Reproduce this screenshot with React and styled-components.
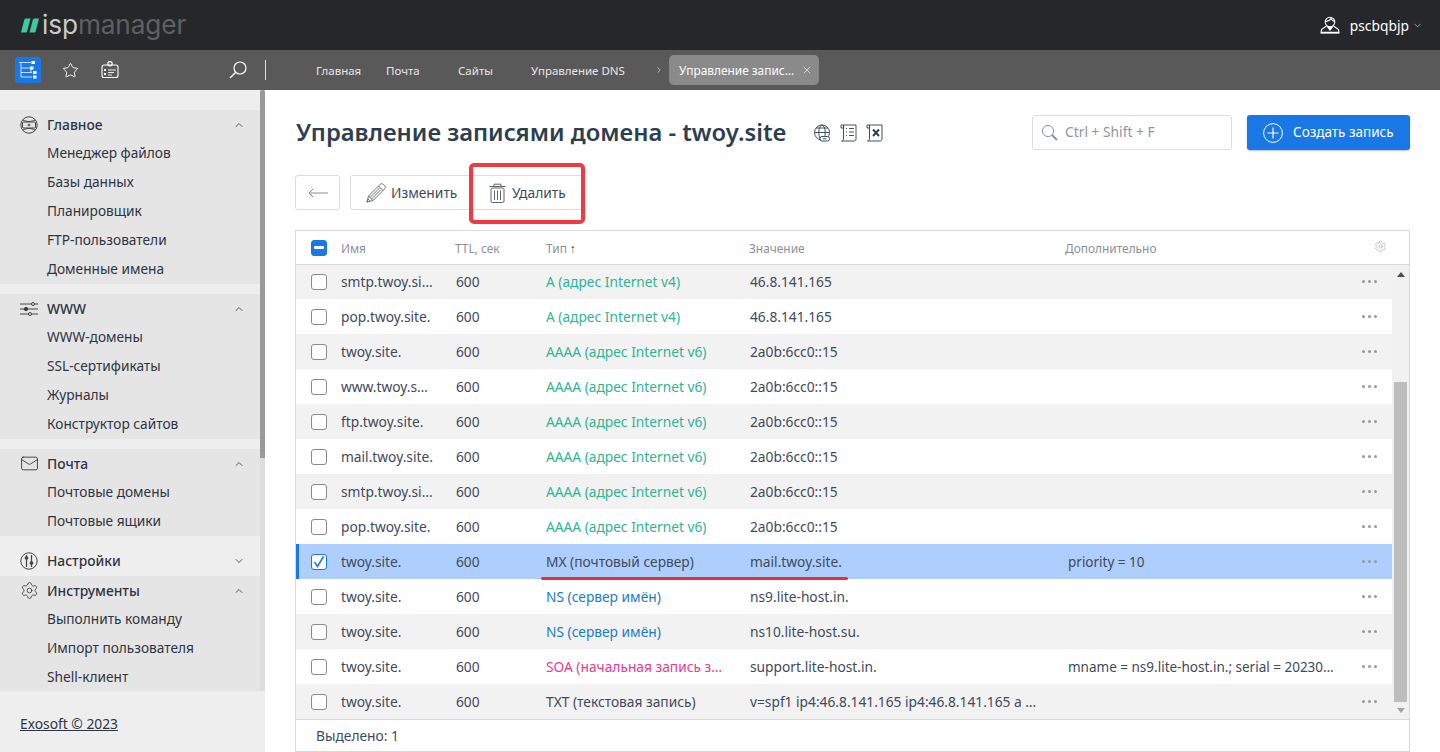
import React from "react";
import styled, { createGlobalStyle } from "styled-components";
import { Star, Settings, Mail, ChevronUp, ChevronDown, ChevronRight, X } from "lucide-react";

const Global = createGlobalStyle`
  html, body { margin: 0; padding: 0; height: 100%; overflow: hidden; background: #fff; }
  body { font-family: "Noto Sans", "Liberation Sans", sans-serif; font-size: 13.8px; color: #3f4a5a; }
  * { box-sizing: border-box; }
`;

const Page = styled.div`display:flex;flex-direction:column;width:1440px;height:752px;position:relative;overflow:hidden;`;
const TopBar = styled.header`height:50px;background:#26272b;display:flex;align-items:center;justify-content:space-between;padding:0 17px 0 21px;flex:none;`;
const Logo = styled.div`display:flex;align-items:center;gap:3px;font-family:"Inter",sans-serif;font-size:26.2px;letter-spacing:-0.1px;line-height:50px;color:#5f6063;`;
const LogoIsp = styled.span`color:#c9cacb;`;
const UserBox = styled.div`display:flex;align-items:center;color:#fff;font-size:13.8px;`;
const UserName = styled.span`margin:0 3px 0 10px;`;
const NavBar = styled.nav`height:40px;background:#595959;display:flex;align-items:center;flex:none;`;
const NavTools = styled.div`width:266px;height:40px;display:flex;align-items:center;padding-left:15px;flex:none;`;
const Tile = styled.div`width:26px;height:26px;border-radius:3px;background:#1a78e6;display:flex;align-items:center;justify-content:center;flex:none;`;
const ToolIcon = styled.div`margin-left:${p=>p.$ml}px;display:flex;align-items:center;color:#fff;flex:none;`;
const Divider = styled.div`width:1px;height:20px;background:#e0e0e0;margin-left:${p=>p.$ml}px;flex:none;`;
const Crumbs = styled.div`display:flex;align-items:center;height:40px;padding-left:50px;font-size:11.5px;color:#e6e6e6;`;
const Crumb = styled.span`width:${p=>p.$w}px;white-space:nowrap;`;
const ActiveTab = styled.div`width:150px;height:30px;border-radius:5px;background:#8a8a8a;color:#fff;font-size:11.9px;display:flex;align-items:center;justify-content:space-between;padding:0 6px 0 10px;margin-left:5px;white-space:nowrap;`;

const Body = styled.div`display:flex;flex:1;min-height:0;`;
const Sidebar = styled.aside`width:265px;background:#eee;display:flex;flex-direction:column;flex:none;`;
const Scroller = styled.div`display:flex;height:601px;flex:none;`;
const Menu = styled.div`width:260px;padding-top:20px;display:flex;flex-direction:column;overflow:hidden;`;
const Track = styled.div`width:5px;background:#ddd;`;
const Thumb = styled.div`height:368px;background:#999;border-radius:2px 2px 0 0;`;
const Group = styled.section`background:${p=>p.$open?"#e5e5e5":"#eee"};margin-bottom:${p=>p.$gap}px;padding-bottom:${p=>p.$open?0:1}px;flex:none;`;
const GroupHead = styled.div`height:29px;display:flex;align-items:center;padding:0 15px 0 20px;color:#2e3542;font-weight:500;`;
const GroupIcon = styled.div`width:27px;display:flex;align-items:center;color:#444;`;
const GroupTitle = styled.span`flex:1;`;
const Item = styled.div`height:29px;line-height:27px;padding-left:47px;color:#2e3542;white-space:nowrap;font-size:13.7px;`;
const Copy = styled.a`display:inline-block;margin:23px 0 0 20px;color:#2e3542;text-decoration:underline;font-size:13.8px;`;

const Main = styled.main`flex:1;min-width:0;padding:25px 30px 0 30px;display:flex;flex-direction:column;`;
const TitleRow = styled.div`display:flex;align-items:center;height:35px;padding-left:1px;`;
const Title = styled.h1`margin:0 0 2px;font-size:23.8px;font-weight:600;color:#2d3e50;white-space:nowrap;`;
const TitleIcons = styled.div`display:flex;align-items:center;gap:9px;margin-left:26px;color:#2d3e50;flex:1;`;
const Search = styled.div`width:200px;height:35px;border:1px solid #ddd;border-radius:3px;display:flex;align-items:center;padding-left:8px;color:#8f959c;gap:7px;`;
const SearchText = styled.span`margin-bottom:2px;`;
const Create = styled.button`width:163px;height:35px;margin-left:15px;background:#1a78e6;border:0;border-radius:3px;color:#fff;font-family:inherit;font-size:13.5px;display:flex;align-items:center;padding:0 0 0 16px;gap:10px;box-shadow:0 1px 2px rgba(0,0,0,.25);`;
const CreateText = styled.span`margin-bottom:2px;`;
const Toolbar = styled.div`display:flex;margin-top:25px;height:35px;`;
const BackBtn = styled.div`width:45px;height:35px;border:1px solid #ddd;border-radius:3px;display:flex;align-items:center;justify-content:center;`;
const BtnGroup = styled.div`margin-left:10px;height:35px;width:235px;border:1px solid #ddd;border-radius:3px;display:flex;align-items:center;color:#3f4a5a;`;
const Btn = styled.div`display:flex;align-items:center;width:${p=>p.$w}px;padding-left:${p=>p.$pl}px;gap:${p=>p.$gap}px;white-space:nowrap;`;

const Table = styled.div`margin-top:20px;width:1115px;height:522px;border:1px solid #d9d9d9;display:flex;flex-direction:column;flex:none;`;
const columns = "45px 115px 90px 204px 317px 1fr 44px";
const HeadRow = styled.div`height:34px;display:grid;grid-template-columns:${columns};align-items:center;border-bottom:1px solid #d9d9d9;font-size:11.9px;color:#8b9098;flex:none;position:relative;z-index:1;`;
const HeadCell = styled.div`white-space:nowrap;margin-left:${p=>p.$ml||0}px;`;
const SortArrow = styled.span`color:#3f4a5a;`;
const Rows = styled.div`flex:1;display:flex;min-height:0;margin-top:-1px;`;
const RowList = styled.div`flex:1;`;
const Row = styled.div`height:35px;display:grid;grid-template-columns:${columns};align-items:center;background:${p=>p.$selected?"#aecffe":p.$odd?"#f2f2f2":"#fff"};box-shadow:${p=>p.$selected?"inset 3px 0 0 #1a78e6":"none"};font-size:13.75px;color:#3f4a5a;`;
const Cell = styled.div`white-space:nowrap;overflow:hidden;padding-left:${p=>p.$pl||0}px;color:${p=>p.$color||"inherit"};font-size:${p=>p.$fs?`${p.$fs}px`:"inherit"};`;
const CheckCell = styled.div`display:flex;justify-content:center;`;
const Check = styled.div`width:16px;height:16px;border-radius:3px;border:1px solid ${p=>p.$on?"#1a78e6":"#8a8a8a"};background:${p=>p.$blue?"#1a78e6":"#fff"};display:flex;align-items:center;justify-content:center;`;
const Dash = styled.div`width:10px;height:2.5px;border-radius:1px;background:#fff;`;
const Dots = styled.div`display:flex;gap:3px;justify-content:center;padding-right:2px;`;
const Dot = styled.i`width:3px;height:3px;border-radius:50%;background:#999;`;
const VScroll = styled.div`width:17px;background:#f1f1f1;display:flex;flex-direction:column;align-items:center;flex:none;`;
const VThumb = styled.div`width:13px;height:320px;background:#bdbdbd;margin-top:${p=>p.$top}px;`;
const ArrowUp = styled.div`margin-top:8px;width:0;height:0;border:4px solid transparent;border-top:0;border-bottom:5px solid #505050;`;
const ArrowDown = styled.div`margin-top:6px;width:0;height:0;border:4px solid transparent;border-bottom:0;border-top:5px solid #a3a3a3;`;
const Footer = styled.div`height:32px;border-top:1px solid #d9d9d9;display:flex;align-items:center;padding-left:20px;flex:none;`;

const RedBox = styled.div`position:absolute;left:469px;top:163px;width:116px;height:61px;border:4px solid #ef3a42;border-radius:5px;pointer-events:none;`;
const RedLine = styled.div`position:absolute;left:541px;top:577px;width:307px;height:3px;border-radius:2px;background:#e8303c;pointer-events:none;`;

const TreeIcon = () => (
  <svg width="20" height="20" viewBox="0 0 20 20" fill="none">
    <path d="M1 2.500h12M3 2.500v14.500M3 8h9M3 12.500h11M3 17h11M13 8v4" stroke="#fff" strokeOpacity=".75" strokeWidth="1"/>
    <g fill="#fff">
      <rect x="13.500" y="1" width="3.500" height="3"/><rect x="12" y="6.500" width="3.500" height="3"/>
      <rect x="15" y="11" width="3.500" height="3"/><rect x="15" y="15.500" width="3.500" height="3"/>
    </g>
  </svg>
);
const CardIcon = () => (
  <svg width="18" height="18" viewBox="0 0 18 18" fill="none" stroke="#fff" strokeWidth="1.100">
    <rect x="1" y="4" width="16" height="12.500" rx="2"/><circle cx="9" cy="2.800" r="2.200"/>
    <path d="M7 9h8M7 11.500h6M7 14h4" strokeWidth=".9"/><rect x="3" y="8" width="2" height="2" fill="#fff" stroke="none"/><rect x="3" y="12" width="2" height="2" fill="#fff" stroke="none"/>
  </svg>
);
const BigSearch = () => (
  <svg width="18" height="18" viewBox="0 0 18 18" fill="none" stroke="#fff" strokeWidth="1.200">
    <circle cx="11" cy="7" r="6"/><path d="M6.800 11.200 1 17" strokeWidth="1.500"/>
  </svg>
);
const UserIcon = () => (
  <svg width="20" height="18" viewBox="0 0 20 18" fill="none" stroke="#fff" strokeWidth="1.100">
    <circle cx="10" cy="6" r="4.800"/><path d="M5.500 5.500C8 5.500 10 4 11 2.500c.8 1.500 2 2.500 3.500 3"/>
    <path d="M6.500 10 1.500 13.500 1 17h18l-.5-3.500L13.500 10"/><path d="M6.500 10.500 10 15l3.500-4.500z" fill="#fff" stroke="none"/><path d="M1 16.500h18" strokeWidth="1.500"/>
  </svg>
);
const GlobeBox = () => (
  <svg width="18" height="18" viewBox="0 0 18 18" fill="none" stroke="#444" strokeWidth="1">
    <circle cx="9" cy="9" r="8.200"/><path d="M3 4c4 2 8 2 12 0M3 14c4-2 8-2 12 0"/>
    <rect x="2.500" y="6" width="13" height="6" rx="1" fill="#e5e5e5"/><path d="M7.500 9h3M9 7.700v2.600"/>
  </svg>
);
const SlidersIcon = () => (
  <svg width="18" height="14" viewBox="0 0 18 14" fill="none" stroke="#444" strokeWidth="1">
    <path d="M0 2h18M0 7h18M0 12h18"/><circle cx="13" cy="2" r="1.500" fill="#e5e5e5"/><circle cx="6" cy="7" r="1.700" fill="#333"/><circle cx="10" cy="12" r="1.500" fill="#e5e5e5"/>
  </svg>
);
const DialIcon = () => (
  <svg width="18" height="18" viewBox="0 0 18 18" fill="none" stroke="#444" strokeWidth="1">
    <circle cx="9" cy="9" r="8.200"/><path d="M6.500 3v12M11.500 3v12" strokeWidth="1.200"/>
    <circle cx="6.500" cy="6" r="1.400" fill="#444"/><circle cx="11.500" cy="11" r="1.400" fill="#444"/>
  </svg>
);
const DocGlobe = () => (
  <svg width="18" height="18" viewBox="0 0 18 18" fill="none" stroke="#2d3e50" strokeWidth=".9">
    <circle cx="9" cy="8.500" r="7.500"/><ellipse cx="9" cy="8.500" rx="3.200" ry="7.500"/><path d="M1.500 8.500h15M3 4h12"/>
    <rect x="7" y="12.500" width="9.500" height="4.500" rx="2" fill="#fff"/><path d="M10 14.800h3.500"/>
  </svg>
);
const DocList = () => (
  <svg width="17" height="18" viewBox="0 0 17 18" fill="none" stroke="#2d3e50" strokeWidth=".9">
    <path d="M3.500 1h12.500v14c0 1-.6 2-2 2H1.500c1.300 0 2-1 2-2z"/><path d="M1 1h2.500v3H1zM6 4.500h1M9 4.500h5M6 8h1M9 8h5M6 11.500h1M9 11.500h5"/>
  </svg>
);
const DocXls = () => (
  <svg width="17" height="18" viewBox="0 0 17 18" fill="none" stroke="#2d3e50" strokeWidth=".9">
    <path d="M3.500 1h12.500v14c0 1-.6 2-2 2H1.500c1.300 0 2-1 2-2z"/><path d="M1 1h2.500v3H1z"/>
    <path d="m7 5.500 6 6.500M13 5.500 7 12" strokeWidth="1.900"/>
  </svg>
);
const SmallSearch = () => (
  <svg width="17" height="17" viewBox="0 0 17 17" fill="none" stroke="#8f959c" strokeWidth="1">
    <circle cx="7" cy="7" r="5.600"/><path d="m11 11 5 5" strokeWidth="2"/>
  </svg>
);
const PlusCircle = () => (
  <svg width="20" height="20" viewBox="0 0 20 20" fill="none" stroke="#fff" strokeWidth="1">
    <circle cx="10" cy="10" r="9.400"/><path d="M10 4.500v11M4.500 10h11" strokeWidth="1.200"/>
  </svg>
);
const BackArrow = () => (
  <svg width="20" height="10" viewBox="0 0 20 10" fill="none" stroke="#8a8f96" strokeWidth="1">
    <path d="M20 5H1M5 1 1 5l4 4"/>
  </svg>
);
const Pencil = () => (
  <svg width="20" height="20" viewBox="0 0 20 20" fill="none" stroke="#6d7278" strokeWidth="1">
    <path d="M1 19 2.500 13 14 1.500c1-1 2.400-1 3.400 0l1.100 1.100c1 1 1 2.400 0 3.400L7 17.500z"/><path d="m12.500 3 4.500 4.500M2.500 13 7 17.500M4 14.500l9.500-9.500M5.500 16l9.500-9.500M1 19l3-1-2-2z"/>
  </svg>
);
const Trash = () => (
  <svg width="17" height="20" viewBox="0 0 17 20" fill="none" stroke="#5d6670" strokeWidth="1">
    <path d="M.5 3.500h16M5 3.500V1.200h7v2.300"/><rect x="2" y="5" width="13" height="14.500" rx="1.500"/><path d="M5.500 7.500v9.500M8.500 7.500v9.500M11.500 7.500v9.500"/>
  </svg>
);
const LogoMark = () => (
  <svg width="18" height="15" viewBox="0 0 19 15" fill="#3fc9a0"><path d="M3.500 1.500C3.800.6 4.300 0 5.300 0H10L6.500 13.500c-.2 1-.8 1.500-1.800 1.500H0zM12.500 1.500c.3-.9.800-1.500 1.800-1.500H19l-3.500 13.500c-.2 1-.8 1.500-1.800 1.500H9z"/></svg>
);

const menu = [
  { icon: <GlobeBox/>, title: "Главное", open: true, gap: 10, items: ["Менеджер файлов","Базы данных","Планировщик","FTP-пользователи","Доменные имена"] },
  { icon: <SlidersIcon/>, title: "WWW", open: true, gap: 10, items: ["WWW-домены","SSL-сертификаты","Журналы","Конструктор сайтов"] },
  { icon: <Mail size={19} strokeWidth={1.100} color="#333"/>, title: "Почта", open: true, gap: 10, items: ["Почтовые домены","Почтовые ящики"] },
  { icon: <DialIcon/>, title: "Настройки", open: false, gap: 0, items: [] },
  { icon: <Settings size={19} strokeWidth={1} color="#333"/>, title: "Инструменты", open: true, gap: 0, items: ["Выполнить команду","Импорт пользователя","Shell-клиент"] },
];

const GREEN = "#2fb592", BLUE = "#1b7cc7", PINK = "#ea3b8c";
const rows = [
  ["smtp.twoy.si…","А (адрес Internet v4)",GREEN,"46.8.141.165",""],
  ["pop.twoy.site.","А (адрес Internet v4)",GREEN,"46.8.141.165",""],
  ["twoy.site.","AAAA (адрес Internet v6)",GREEN,"2a0b:6cc0::15",""],
  ["www.twoy.s…","AAAA (адрес Internet v6)",GREEN,"2a0b:6cc0::15",""],
  ["ftp.twoy.site.","AAAA (адрес Internet v6)",GREEN,"2a0b:6cc0::15",""],
  ["mail.twoy.site.","AAAA (адрес Internet v6)",GREEN,"2a0b:6cc0::15",""],
  ["smtp.twoy.si…","AAAA (адрес Internet v6)",GREEN,"2a0b:6cc0::15",""],
  ["pop.twoy.site.","AAAA (адрес Internet v6)",GREEN,"2a0b:6cc0::15",""],
  ["twoy.site.","MX (почтовый сервер)",null,"mail.twoy.site.","priority = 10"],
  ["twoy.site.","NS (сервер имён)",BLUE,"ns9.lite-host.in.",""],
  ["twoy.site.","NS (сервер имён)",BLUE,"ns10.lite-host.su.",""],
  ["twoy.site.","SOA (начальная запись з…",PINK,"support.lite-host.in.","mname = ns9.lite-host.in.; serial = 20230…"],
  ["twoy.site.","TXT (текстовая запись)",null,"v=spf1 ip4:46.8.141.165 ip4:46.8.141.165 a …",""],
];

export default function App() {
  return (
    <Page>
      <Global/>
      <TopBar>
        <Logo><LogoMark/><span><LogoIsp>isp</LogoIsp>manager</span></Logo>
        <UserBox><UserIcon/><UserName>pscbqbjp</UserName><ChevronDown size={11} strokeWidth={1.200}/></UserBox>
      </TopBar>
      <NavBar>
        <NavTools>
          <Tile><TreeIcon/></Tile>
          <ToolIcon $ml={21}><Star size={17} strokeWidth={1.300}/></ToolIcon>
          <ToolIcon $ml={22}><CardIcon/></ToolIcon>
          <ToolIcon $ml={110}><BigSearch/></ToolIcon>
          <Divider $ml={18}/>
        </NavTools>
        <Crumbs>
          <Crumb $w={70}>Главная</Crumb>
          <Crumb $w={72}>Почта</Crumb>
          <Crumb $w={73}>Сайты</Crumb>
          <Crumb $w={123}>Управление DNS</Crumb>
          <ChevronRight size={10} strokeWidth={1.500}/>
          <ActiveTab><span>Управление запис…</span><X size={12} strokeWidth={1.200}/></ActiveTab>
        </Crumbs>
      </NavBar>
      <Body>
        <Sidebar>
          <Scroller>
            <Menu>
              {menu.map(g => (
                <Group key={g.title} $open={g.open} $gap={g.gap}>
                  <GroupHead>
                    <GroupIcon>{g.icon}</GroupIcon>
                    <GroupTitle>{g.title}</GroupTitle>
                    {g.open ? <ChevronUp size={12} strokeWidth={1.600} color="#333"/> : <ChevronDown size={12} strokeWidth={1.600} color="#333"/>}
                  </GroupHead>
                  {g.items.map(i => <Item key={i}>{i}</Item>)}
                </Group>
              ))}
            </Menu>
            <Track><Thumb/></Track>
          </Scroller>
          <div><Copy>Exosoft © 2023</Copy></div>
        </Sidebar>
        <Main>
          <TitleRow>
            <Title>Управление записями домена - twoy.site</Title>
            <TitleIcons><DocGlobe/><DocList/><DocXls/></TitleIcons>
            <Search><SmallSearch/><SearchText>Ctrl + Shift + F</SearchText></Search>
            <Create><PlusCircle/><CreateText>Создать запись</CreateText></Create>
          </TitleRow>
          <Toolbar>
            <BackBtn><BackArrow/></BackBtn>
            <BtnGroup>
              <Btn $w={118} $pl={15} $gap={5}><Pencil/>Изменить</Btn>
              <Btn $w={115} $pl={20} $gap={6}><Trash/>Удалить</Btn>
            </BtnGroup>
          </Toolbar>
          <Table>
            <HeadRow>
              <CheckCell><Check $blue $on><Dash/></Check></CheckCell>
              <HeadCell>Имя</HeadCell>
              <HeadCell $ml={-1}>TTL, сек</HeadCell>
              <HeadCell>Тип <SortArrow>↑</SortArrow></HeadCell>
              <HeadCell $ml={-1}>Значение</HeadCell>
              <HeadCell $ml={-2}>Дополнительно</HeadCell>
              <HeadCell $ml={9}><Settings size={13} strokeWidth={1} color="#9a9a9a"/></HeadCell>
            </HeadRow>
            <Rows>
              <RowList>
                {rows.map((r,i) => {
                  const sel = i === 8;
                  return (
                    <Row key={i} $odd={i%2===0} $selected={sel}>
                      <CheckCell>
                        <Check $on={sel}>
                          {sel && <svg width="14" height="14" viewBox="0 0 14 14" fill="none" stroke="#1a78e6" strokeWidth="1.500"><path d="m2.500 7 3 4.500L11.500 1.500"/></svg>}
                        </Check>
                      </CheckCell>
                      <Cell>{r[0]}</Cell>
                      <Cell>600</Cell>
                      <Cell $color={r[2]}>{r[1]}</Cell>
                      <Cell>{r[3]}</Cell>
                      <Cell $pl={1} $fs={13.5}>{r[4]}</Cell>
                      <Dots><Dot/><Dot/><Dot/></Dots>
                    </Row>
                  );
                })}
              </RowList>
              <VScroll>
                <ArrowUp/>
                <VThumb $top={105}/>
                <ArrowDown/>
              </VScroll>
            </Rows>
            <Footer>Выделено: 1</Footer>
          </Table>
        </Main>
      </Body>
      <RedBox/>
      <RedLine/>
    </Page>
  );
}
